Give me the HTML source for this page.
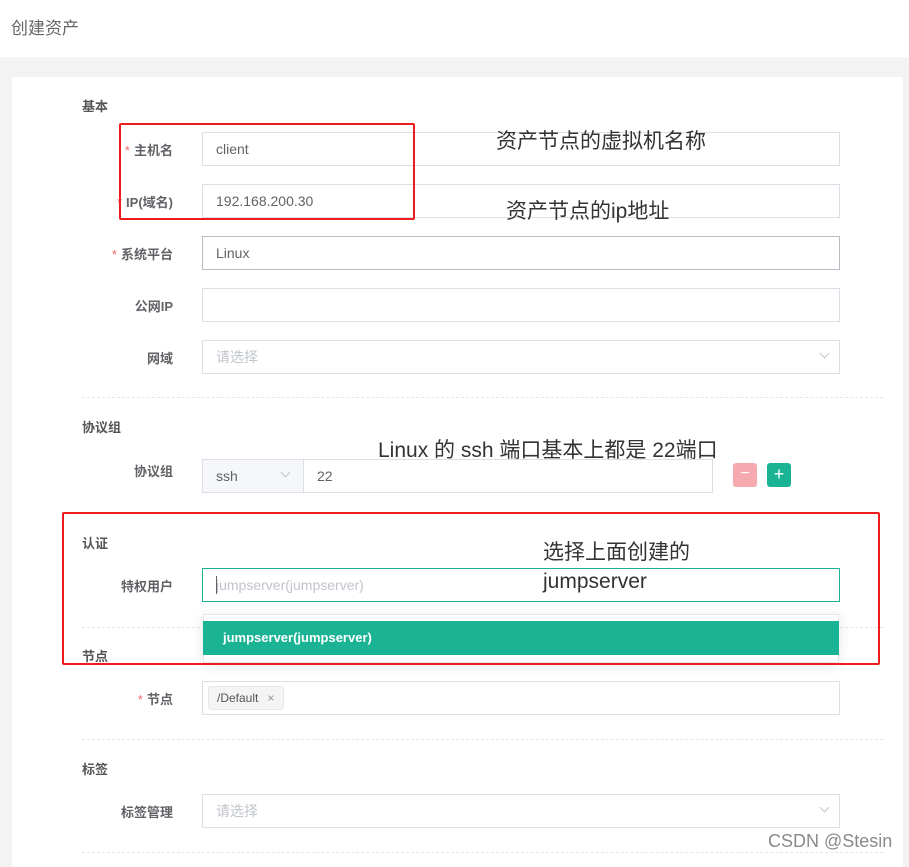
<!DOCTYPE html>
<html><head><meta charset="utf-8"><style>
*{margin:0;padding:0;box-sizing:border-box}
body{width:909px;height:859px;overflow:hidden;background:#f3f3f4;font-family:"Liberation Sans","Noto Sans CJK SC",sans-serif;position:relative}
.a{position:absolute}
.hdr{left:0;top:0;width:909px;height:57px;background:#fff}
.card{left:12px;top:77px;width:891px;height:790px;background:#fff}
.sec{font-size:13px;font-weight:bold;color:#555;left:82px}
.lb{font-size:13px;font-weight:bold;color:#606266;width:140px;left:33px;text-align:right}
.lb i{color:#f56c6c;font-style:normal;font-weight:normal;margin-right:4px}
.in{left:202px;width:638px;height:34px;border:1px solid #dcdfe6;font-size:14px;color:#606266;padding-left:13px;line-height:32px}
.ph{color:#c0c4cc}
.dv{left:82px;width:801px;border-top:1px dashed #e6e6e6;height:0}
.ar{position:absolute;right:11px;top:9px;width:7px;height:7px;border-right:1px solid #c0c4cc;border-bottom:1px solid #c0c4cc;transform:rotate(45deg)}
.ann{font-size:21px;color:#333;font-family:"Liberation Sans","Noto Sans CJK SC",sans-serif}
.red{border:2px solid #ee1c1c;border-radius:2px}
</style></head><body>
<div class="a hdr"></div>
<div class="a" style="left:11px;top:14px;font-size:17px;color:#666">创建资产</div>
<div class="a card"></div>

<div class="a sec" style="top:96px">基本</div>
<div class="a lb" style="top:140px"><i>*</i>主机名</div>
<div class="a in" style="top:132px">client</div>
<div class="a lb" style="top:192px"><i>*</i>IP(域名)</div>
<div class="a in" style="top:184px">192.168.200.30</div>
<div class="a lb" style="top:244px"><i>*</i>系统平台</div>
<div class="a in" style="top:236px;border-color:#b8bcc4">Linux</div>
<div class="a lb" style="top:296px">公网IP</div>
<div class="a in" style="top:288px"></div>
<div class="a lb" style="top:348px">网域</div>
<div class="a in ph" style="top:340px">请选择<span class="ar"></span></div>
<div class="a dv" style="top:397px"></div>

<div class="a sec" style="top:417px">协议组</div>
<div class="a lb" style="top:461px">协议组</div>
<div class="a in" style="top:459px;width:511px;padding-left:114px">22</div>
<div class="a" style="left:202px;top:459px;width:102px;height:34px;background:#f5f7fa;border:1px solid #dcdfe6;font-size:14px;color:#606266;padding-left:13px;line-height:32px">ssh<span class="ar" style="right:14px"></span></div>
<div class="a" style="left:733px;top:463px;width:24px;height:24px;background:#f7a9b0;border-radius:3px;color:#fff;text-align:center;line-height:22px;font-size:16px">−</div>
<div class="a" style="left:767px;top:463px;width:24px;height:24px;background:#1ab394;border-radius:3px;color:#fff;text-align:center;line-height:22px;font-size:18px">+</div>

<div class="a sec" style="top:533px">认证</div>
<div class="a lb" style="top:576px">特权用户</div>
<div class="a in ph" style="top:568px;border-color:#1ab394">jumpserver(jumpserver)</div>
<div class="a" style="left:216px;top:576px;width:1px;height:18px;background:#606266"></div>
<div class="a dv" style="top:627px"></div>
<div class="a" style="left:203px;top:614px;width:636px;height:49px;background:#fff;border:1px solid #e4e7ed;box-shadow:0 2px 12px rgba(0,0,0,.1)"></div>
<div class="a" style="left:203px;top:621px;width:636px;height:34px;background:#1ab394;color:#fff;font-size:13px;font-weight:bold;line-height:34px;padding-left:20px">jumpserver(jumpserver)</div>
<div class="a sec" style="top:646px">节点</div>

<div class="a lb" style="top:689px"><i>*</i>节点</div>
<div class="a in" style="top:681px"></div>
<div class="a" style="left:208px;top:686px;width:76px;height:24px;background:#f4f4f5;border:1px solid #e9e9eb;border-radius:3px;font-size:12px;color:#555;line-height:22px;padding-left:8px">/Default<span style="margin-left:9px;color:#909399">×</span></div>
<div class="a dv" style="top:739px"></div>

<div class="a sec" style="top:759px">标签</div>
<div class="a lb" style="top:802px">标签管理</div>
<div class="a in ph" style="top:794px">请选择<span class="ar"></span></div>
<div class="a dv" style="top:852px"></div>

<div class="a red" style="left:119px;top:123px;width:296px;height:97px"></div>
<div class="a red" style="left:62px;top:512px;width:818px;height:153px"></div>
<div class="a ann" style="left:496px;top:125px">资产节点的虚拟机名称</div>
<div class="a ann" style="left:506px;top:195px">资产节点的ip地址</div>
<div class="a ann" style="left:378px;top:434px">Linux 的 ssh 端口基本上都是 22端口</div>
<div class="a ann" style="left:543px;top:538px;line-height:29px">选择上面创建的<br>jumpserver</div>
<div class="a" style="left:768px;top:831px;font-size:18px;color:#8a8a8a">CSDN @Stesin</div>
</body></html>
